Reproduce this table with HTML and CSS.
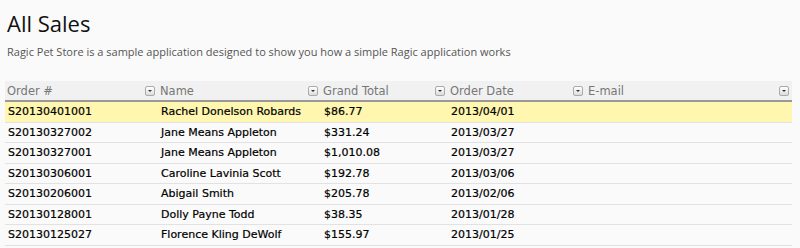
FILE: index.html
```html
<!DOCTYPE html>
<html>
<head>
<meta charset="utf-8">
<link rel="stylesheet" href="styles.css">
</head>
<body>
<div class="page">
  <h1 class="title">All Sales</h1>
  <p class="desc">Ragic Pet Store is a sample application designed to show you how a simple Ragic application works</p>
  <table class="grid">
    <colgroup>
      <col class="c1"><col class="c2"><col class="c3"><col class="c4"><col class="c5">
    </colgroup>
    <thead>
      <tr>
        <th><div class="hd"><span>Order #</span><i class="dd"></i></div></th>
        <th><div class="hd"><span>Name</span><i class="dd"></i></div></th>
        <th><div class="hd"><span>Grand Total</span><i class="dd"></i></div></th>
        <th><div class="hd"><span>Order Date</span><i class="dd"></i></div></th>
        <th><div class="hd"><span>E-mail</span><i class="dd"></i></div></th>
      </tr>
    </thead>
    <tbody>
      <tr class="sel"><td>S20130401001</td><td>Rachel Donelson Robards</td><td>$86.77</td><td>2013/04/01</td><td></td></tr>
      <tr><td>S20130327002</td><td>Jane Means Appleton</td><td>$331.24</td><td>2013/03/27</td><td></td></tr>
      <tr><td>S20130327001</td><td>Jane Means Appleton</td><td>$1,010.08</td><td>2013/03/27</td><td></td></tr>
      <tr><td>S20130306001</td><td>Caroline Lavinia Scott</td><td>$192.78</td><td>2013/03/06</td><td></td></tr>
      <tr><td>S20130206001</td><td>Abigail Smith</td><td>$205.78</td><td>2013/02/06</td><td></td></tr>
      <tr><td>S20130128001</td><td>Dolly Payne Todd</td><td>$38.35</td><td>2013/01/28</td><td></td></tr>
      <tr><td>S20130125027</td><td>Florence Kling DeWolf</td><td>$155.97</td><td>2013/01/25</td><td></td></tr>
    </tbody>
  </table>
</div>
</body>
</html>
```
FILE: styles.css
```css
html, body {
  margin: 0;
  padding: 0;
  background: #fafafa;
}
.page {
  padding: 9px 8px 0 5px;
}
.title {
  margin: 0 0 0 2px;
  font-family: "Open Sans", sans-serif;
  font-weight: 400;
  font-size: 22px;
  line-height: 28px;
  color: #111;
}
.desc {
  margin: 7px 0 0 2px;
  font-family: "Open Sans", sans-serif;
  font-size: 11px;
  line-height: 16px;
  color: #555;
}
.grid {
  margin-top: 21px;
  width: 787px;
  border-collapse: collapse;
  table-layout: fixed;
  font-family: "DejaVu Sans", sans-serif;
}
.c1 { width: 153px; }
.c2 { width: 163px; }
.c3 { width: 127px; }
.c4 { width: 138px; }
.c5 { width: 206px; }
thead th {
  background: #f1f1f1;
  border-bottom: 2px solid #999;
  padding: 0;
  height: 19px;
  font-weight: 400;
  text-align: left;
}
.hd {
  display: flex;
  align-items: center;
  justify-content: space-between;
  padding: 0 3px 0 2px;
  font-size: 11.5px;
  color: #777;
}
.dd {
  width: 8px;
  height: 8px;
  border: 1px solid #aaa;
  border-radius: 2px;
  background: linear-gradient(#fff, #ddd);
  position: relative;
  flex: none;
}
.dd::after {
  content: "";
  position: absolute;
  left: 2px;
  top: 3px;
  border-left: 2px solid transparent;
  border-right: 2px solid transparent;
  border-top: 2px solid #333;
}
tbody td {
  height: 19.5px;
  padding: 0 3px;
  border-bottom: 1px solid #e2e2e2;
  font-size: 11px;
  color: #000;
  -webkit-text-stroke: 0.2px #000;
  white-space: nowrap;
  overflow: hidden;
}
tbody tr.sel td {
  background: #fff6b0;
}
```
